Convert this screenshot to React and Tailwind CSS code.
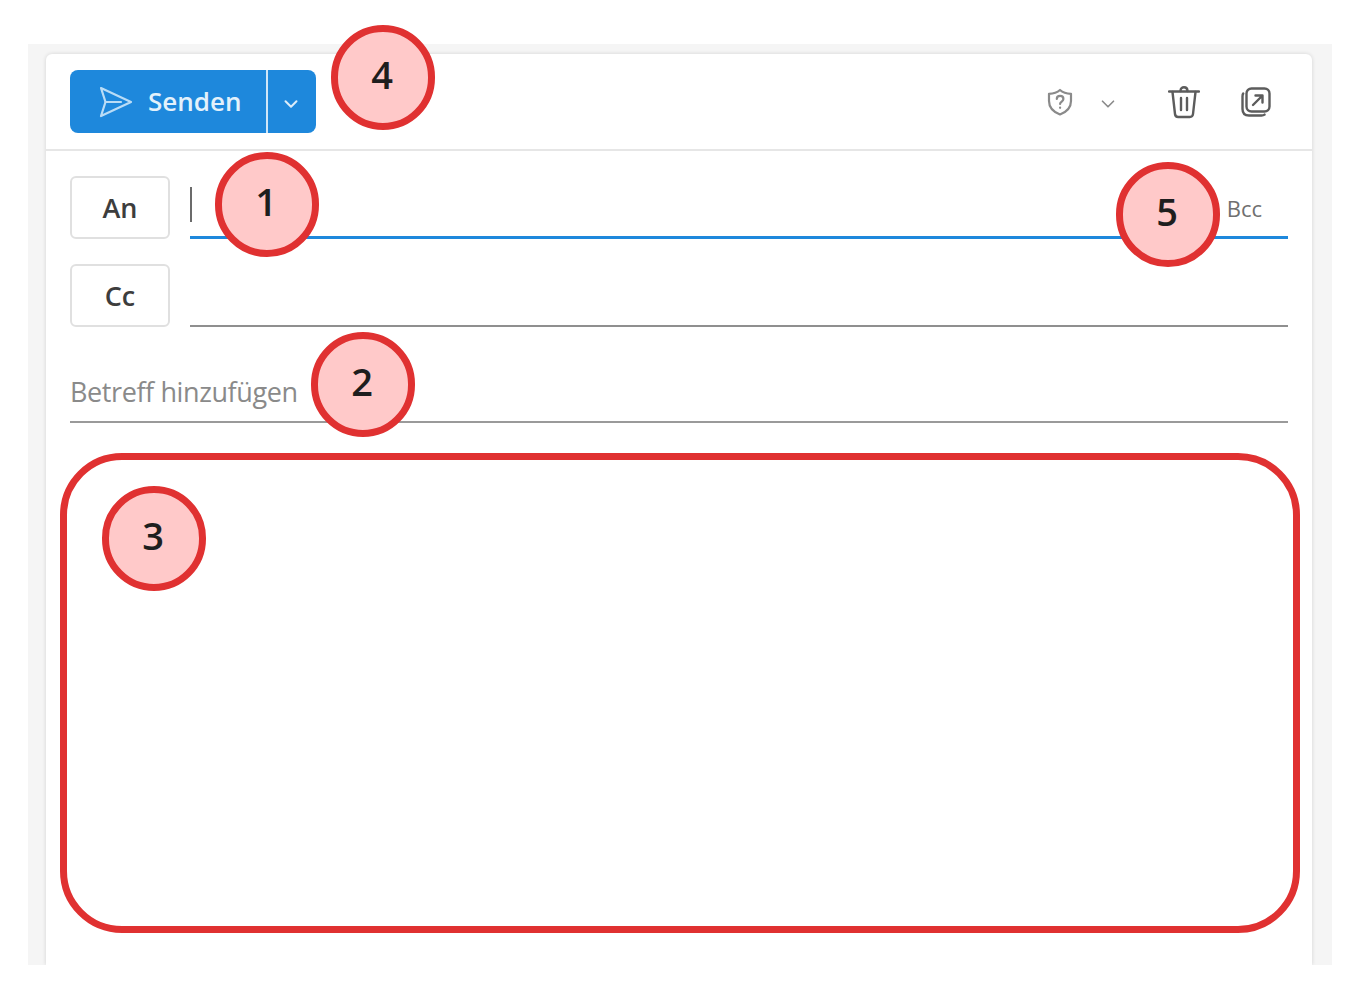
import React from "react";
import { ChevronDown } from "lucide-react";

const SendIcon = () => (
  <svg width="34" height="32" viewBox="0 0 34 32" fill="none" stroke="currentColor" strokeWidth="2.2" strokeLinejoin="round" strokeLinecap="round" className="text-[#b9dcf6]">
    <path d="M2 2 L32 16 L2 30 L6.5 16 Z" />
    <path d="M6.5 16 H22" />
  </svg>
);

const ShieldIcon = () => (
  <svg width="26" height="28" viewBox="0 0 26 28" fill="none" stroke="#8a8a8a" strokeWidth="2.2" strokeLinejoin="round" strokeLinecap="round">
    <path d="M13 2 C16 4.6 19.6 5.6 24 5.8 V13 C24 19.5 20 23.8 13 26.5 C6 23.8 2 19.5 2 13 V5.8 C6.4 5.6 10 4.6 13 2 Z" />
    <path d="M9.8 11 C9.8 6.9 16.4 6.9 16.4 11 C16.4 13.5 13.1 13.6 13.1 16" />
    <path d="M13.1 19.6 V19.8" />
  </svg>
);

const TrashIcon = () => (
  <svg width="32" height="34" viewBox="0 0 32 34" fill="none" stroke="#5c5c5c" strokeWidth="2.4" strokeLinejoin="round" strokeLinecap="round">
    <path d="M1 6.5 H31" />
    <path d="M12.5 6 C12.5 1 19.5 1 19.5 6" />
    <path d="M4.5 7 L7 29 C7.2 31 8.4 32 10.2 32 H21.8 C23.6 32 24.8 31 25 29 L27.5 7" />
    <path d="M13 13 V25 M19 13 V25" />
  </svg>
);

const PopOutIcon = () => (
  <svg width="30" height="30" viewBox="0 0 30 30" fill="none" stroke="#5c5c5c" strokeWidth="2.4" strokeLinejoin="round" strokeLinecap="round">
    <rect x="5.5" y="1.5" width="23" height="23" rx="5" />
    <path d="M2.2 6.5 C1.6 7.4 1.5 8.2 1.5 9.5 V22 C1.5 26 4 28.5 8 28.5 H20.5 C21.8 28.5 22.8 28.2 23.6 27.6" />
    <path d="M12 18 L21.5 8.5 M14.5 8.5 H21.5 V15.5" />
  </svg>
);

const RecipientButton = ({ label }) => (
  <button className="w-[100px] h-[63px] shrink-0 rounded-[6px] border-2 border-[#e0e0e0] bg-white text-[27px] font-semibold text-[#3d3d3d] leading-none">
    {label}
  </button>
);

const Badge = ({ className, children }) => (
  <div className={`absolute w-[104px] h-[105px] pb-[7px] pr-[2px] rounded-full border-[7px] border-[#e03131] bg-[#ffc9c9] flex items-center justify-center text-[38px] font-semibold text-[#1e1e1e] leading-none ${className}`}>
    {children}
  </div>
);

export default function App() {
  return (
    <div className="relative w-[1360px] h-[993px] bg-white overflow-hidden font-['Open_Sans',sans-serif]">
      <div className="pt-[44px] px-[28px] h-[965px]">
        <div className="h-full overflow-hidden bg-[#f5f5f5] pt-[10px] pl-[18px] pr-[20px]">
          <div className="h-full bg-white rounded-t-[6px] shadow-[0_0_4px_rgba(0,0,0,0.14)]">
            <div className="h-[97px] border-b-2 border-[#e6e6e6] pl-[24px] pr-[41px] pt-[16px] flex items-start justify-between">
              <div className="flex h-[63px] w-[246px] rounded-[8px] bg-[#1e88dc] text-white">
                <div className="w-[196px] flex items-center pl-[29px] gap-[15px] text-[26px] font-semibold leading-none">
                  <SendIcon />
                  <span className="mb-[2px] text-[#e3f1fb]">Senden</span>
                </div>
                <div className="w-[2px] bg-[#cfe6f8]" />
                <div className="flex-1 flex items-center justify-center pt-[4px] pr-[3px]">
                  <ChevronDown size={22} strokeWidth={2.2} className="text-[#dcedfa]" />
                </div>
              </div>
              <div className="flex items-center h-[63px]">
                <ShieldIcon />
                <ChevronDown size={22} strokeWidth={1.8} className="ml-[24px] mr-[49px] mt-[5px] text-[#8a8a8a]" />
                <TrashIcon />
                <div className="ml-[41px]">
                  <PopOutIcon />
                </div>
              </div>
            </div>

            <div className="px-[24px]">
              <div className="flex gap-[20px] pt-[25px]">
                <RecipientButton label="An" />
                <div className="flex-1 h-[63px] border-b-[3px] border-[#1e88dc] flex items-center justify-between">
                  <div className="w-[2px] h-[35px] mb-[4px] bg-[#6b6b6b]" />
                  <span className="mr-[26px] mt-[3px] text-[22px] text-[#707070] leading-none">Bcc</span>
                </div>
              </div>
              <div className="flex gap-[20px] pt-[25px]">
                <RecipientButton label="Cc" />
                <div className="flex-1 h-[63px] border-b-2 border-[#8f8f8f]" />
              </div>
              <div className="mt-[33px] h-[63px] border-b-2 border-[#9a9a9a] flex items-center text-[27px] text-[#8a8a8a] leading-none">
                <span className="mt-[2px] tracking-[-0.4px]">Betreff hinzufügen</span>
              </div>
            </div>
          </div>
        </div>
      </div>

      {/* annotations drawn on top of the screenshot */}
      <div className="absolute left-[60px] top-[453px] w-[1240px] h-[480px] rounded-[62px] border-[7px] border-[#e03131]" />
      <Badge className="left-[331px] top-[25px]">4</Badge>
      <Badge className="left-[215px] top-[152px]">1</Badge>
      <Badge className="left-[1116px] top-[162px]">5</Badge>
      <Badge className="left-[311px] top-[332px]">2</Badge>
      <Badge className="left-[102px] top-[486px]">3</Badge>
    </div>
  );
}
